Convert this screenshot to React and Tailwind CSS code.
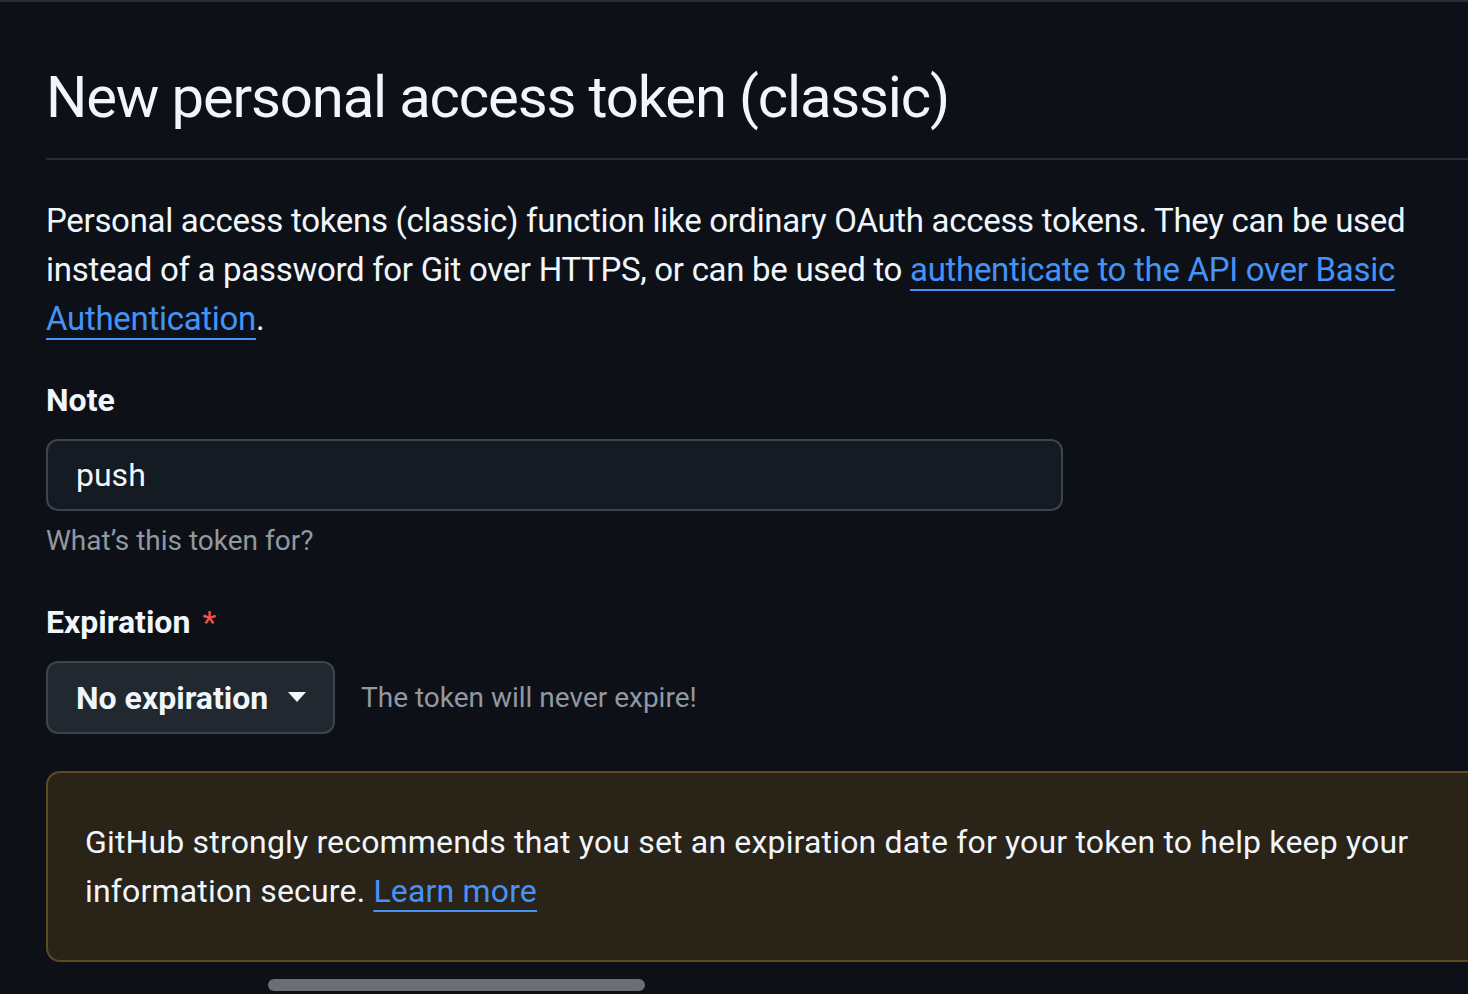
export default function App() {
  return (
    <div
      className="relative h-[994px] w-[1468px] overflow-hidden border-t-2 border-[#2a2e35] bg-[#0d1117] text-[#f0f6fc]"
      style={{ fontFamily: "Roboto, 'Noto Sans', sans-serif" }}
    >
      <div className="w-[1500px] pl-[46px]">
        <div className="border-b-2 border-[#262b33] pt-[60px] pb-[26px]">
          <h2 className="text-[58px] leading-[70px] font-normal tracking-[-1.15px]">
            New personal access token (classic)
          </h2>
        </div>
        <p className="mt-[36px] w-[1390px] text-[33px] leading-[49px] tracking-[-0.3px] text-[#f0f6fc]">
          Personal access tokens (classic) function like ordinary OAuth access tokens. They can be used instead of a
          password for Git over HTTPS, or can be used to{" "}
          <a className="text-[#4493f8] underline decoration-2 underline-offset-[8px]">
            authenticate to the API over Basic Authentication
          </a>
          .
        </p>
        <div className="mt-[35px] text-[32px] leading-[44px] font-bold">Note</div>
        <div className="mt-[17px] flex h-[72px] w-[1017px] items-center rounded-[12px] border-2 border-[#3d444d] bg-[#151b23] pl-[28px] text-[32px]">
          push
        </div>
        <div className="mt-[12px] text-[28px] leading-[36px] text-[#9198a1]">What’s this token for?</div>
        <div className="mt-[41px] flex items-start text-[32px] leading-[44px] font-bold">
          Expiration
          <span className="ml-[12px] font-normal text-[#f85149]">*</span>
        </div>
        <div className="mt-[17px] flex items-center">
          <div className="flex h-[73px] w-[289px] items-center rounded-[12px] border-2 border-[#3d444d] bg-[#212830] pl-[28px] text-[32px] font-bold">
            No expiration
            <svg className="ml-[20px]" width="18" height="11" viewBox="0 0 18 11">
              <path d="M0 0 L18 0 L9 10 Z" fill="#f0f6fc" />
            </svg>
          </div>
          <div className="ml-[26px] text-[28px] text-[#9198a1]">The token will never expire!</div>
        </div>
        <div className="mt-[37px] h-[191px] rounded-[14px] border-2 border-[#5e4a22] bg-[#2a2318] pt-[45px] pl-[37px]">
          <p className="w-[1360px] text-[32px] leading-[49px] tracking-[0.17px] text-[#f0f6fc]">
            GitHub strongly recommends that you set an expiration date for your token to help keep your information
            secure.{" "}
            <a className="text-[#4493f8] underline decoration-2 underline-offset-[8px]">Learn more</a>
          </p>
        </div>
      </div>
      <div className="absolute left-[268px] top-[977px] h-[12px] w-[377px] rounded-full bg-[#6b6e75]" />
    </div>
  );
}
